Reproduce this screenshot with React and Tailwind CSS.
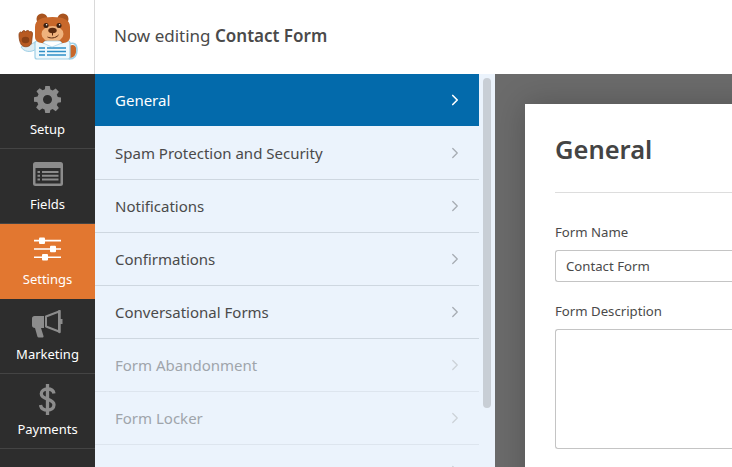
import React from 'react';
import { ChevronRight } from 'lucide-react';

const font = "font-['Noto_Sans','Open_Sans',sans-serif]";

const Logo = () => (
  <svg width="66" height="54" viewBox="0 0 66 54">
    {/* tail */}
    <path d="M54 36c7-3 8 2 7 7-1 4-4 5-7 5z" fill="#c8682b" />
    {/* right sleeve */}
    <path d="M54 34c5-2 8 0 8 6s-3 9-8 9" fill="none" stroke="#9fd0e6" strokeWidth="1.600" />
    {/* left sleeve */}
    <path d="M6 37c3 5 10 6 15 2l-1-7c-3 2-6 3-8 1z" fill="#dcecf4" stroke="#9fd0e6" strokeWidth="1" />
    {/* shirt */}
    <rect x="20" y="31" width="35" height="18" rx="2" fill="#eef8fc" stroke="#9fd0e6" strokeWidth="1.200" />
    <path d="M24 38h27M24 41.500h27M24 45h27" stroke="#2f8fc6" strokeWidth="1.500" />
    <rect x="30" y="36.500" width="2" height="10" fill="#eef8fc" />
    {/* ears */}
    <circle cx="27" cy="9" r="5.500" fill="#a8541f" />
    <circle cx="48" cy="9" r="5.500" fill="#a8541f" />
    {/* head */}
    <path d="M20 17c0-7 6-10 17.500-10S55 10 55 17v10c0 5-5 7-17.500 7S20 32 20 27z" fill="#c8682b" />
    <ellipse cx="37.500" cy="24" rx="11" ry="8" fill="#efb27d" />
    <path d="M28 33l9 4 10-4-2-2H30z" fill="#ffffff" stroke="#9fd0e6" strokeWidth="0.700" />
    <circle cx="31" cy="15.500" r="2.500" fill="#3a2012" />
    <circle cx="44" cy="15.500" r="2.500" fill="#3a2012" />
    <circle cx="31.600" cy="14.800" r="0.800" fill="#ffffff" />
    <circle cx="44.600" cy="14.800" r="0.800" fill="#ffffff" />
    <ellipse cx="37.500" cy="20.500" rx="4.200" ry="2.800" fill="#5a2a10" />
    <path d="M37.500 23v2.500M32.500 27c3 1.500 8 1.500 11-2" stroke="#5a2a10" strokeWidth="1" fill="none" />
    {/* paw */}
    <path d="M4 25c0-3 2-4 3-2 0-3 3-3 3.500-1 1-2 3.500-2 4 0 1.500-1 3-.5 3 2l-1 9c-1 4-7 5-10 2-2-3-2.500-7-2.500-10z" fill="#b85a22" stroke="#8a4116" strokeWidth="0.800" />
    <ellipse cx="10.500" cy="30" rx="3.800" ry="3.200" fill="#8a4116" />
  </svg>
);

const IconGear = () => (
  <svg width="27" height="27" viewBox="0 0 24 24" fill="#8c8c8c">
    <path fillRule="evenodd" d="M10 0h4l.6 3.200c.7.200 1.400.500 2 .9l2.700-1.900 2.800 2.800-1.900 2.700c.4.600.7 1.300.9 2l3.200.6v4l-3.200.6c-.2.700-.5 1.400-.9 2l1.900 2.700-2.800 2.800-2.700-1.900c-.6.400-1.300.7-2 .9L14 24h-4l-.6-3.200c-.7-.2-1.400-.5-2-.9l-2.700 1.900-2.800-2.800 1.900-2.700c-.4-.6-.7-1.300-.9-2L0 14v-4l3.200-.6c.2-.7.5-1.400.9-2L2.200 4.700 5 1.900l2.700 1.900c.6-.4 1.300-.7 2-.9zM12 8a4 4 0 1 0 0 8 4 4 0 0 0 0-8z" />
  </svg>
);

const IconFields = () => (
  <svg width="30" height="24" viewBox="0 0 30 24">
    <rect width="30" height="24" rx="2.500" fill="#8c8c8c" />
    <rect x="2.500" y="6" width="25" height="15.500" fill="#2d2d2d" />
    <path d="M4.500 9h2.500v2H4.500zM4.500 12.800h2.500v2H4.500zM4.500 16.500h2.500v2H4.500zM9 9h16.500v2H9zM9 12.800h16.500v2H9zM9 16.500h16.500v2H9z" fill="#8c8c8c" />
  </svg>
);

const IconSliders = () => (
  <svg width="27" height="24" viewBox="0 0 27 24" fill="#ffffff">
    <path d="M0 2.800h27v1.600H0zM0 11.200h27v1.600H0zM0 19.400h27v1.600H0z" />
    <rect x="5" y="0.500" width="6" height="6.500" rx="1" />
    <rect x="16" y="8.700" width="6" height="6.500" rx="1" />
    <rect x="8" y="17" width="6" height="6.500" rx="1" />
  </svg>
);

const IconMegaphone = () => (
  <svg width="31" height="28" viewBox="0 0 31 28">
    <path d="M0 8.500c0-1.500 1-2.500 2.500-2.500H12v12H9l2.500 8c.2.900-.4 1.600-1.200 1.600H6.800c-.7 0-1.200-.4-1.400-1L3 18c-1.800 0-3-1-3-2.500z" fill="#8c8c8c" />
    <path d="M14 6.500 27 1.500v20L14 16.500z" fill="none" stroke="#8c8c8c" strokeWidth="2" strokeLinejoin="round" />
    <path d="M27.500 1v21" stroke="#8c8c8c" strokeWidth="2.500" strokeLinecap="round" />
    <rect x="28" y="9" width="2.500" height="5" fill="#8c8c8c" />
  </svg>
);

const IconDollar = () => (
  <svg width="17" height="31" viewBox="0 0 17 31" fill="none">
    <path d="M15 9.500c-.5-2.800-3-4.500-6.500-4.500C5 5 2.300 6.800 2.300 9.800c0 6.400 12.700 4.200 12.700 11 0 3.200-2.800 5.200-6.500 5.200-3.800 0-6.500-2-7-5" stroke="#8c8c8c" strokeWidth="3.300" />
    <path d="M8.500 0v31" stroke="#8c8c8c" strokeWidth="3.300" />
  </svg>
);

const tabs = [
  { name: 'Setup', icon: <IconGear /> },
  { name: 'Fields', icon: <IconFields /> },
  { name: 'Settings', icon: <IconSliders />, active: true },
  { name: 'Marketing', icon: <IconMegaphone /> },
  { name: 'Payments', icon: <IconDollar /> },
];

const sections = [
  { name: 'General', active: true },
  { name: 'Spam Protection and Security' },
  { name: 'Notifications' },
  { name: 'Confirmations' },
  { name: 'Conversational Forms' },
  { name: 'Form Abandonment', muted: true },
  { name: 'Form Locker', muted: true },
  { name: 'Form Pages', muted: true },
];

const SidebarTab = ({ tab }) => (
  <div
    className={`h-[75px] shrink-0 flex flex-col items-center border-b border-[#444444] ${
      tab.active ? 'bg-[#e27730] border-[#e27730]' : ''
    }`}
  >
    <div className="h-[46px] w-full flex items-center justify-center pt-1">{tab.icon}</div>
    <span className="text-[13px] leading-[18px] text-white">{tab.name}</span>
  </div>
);

const SectionRow = ({ section }) => {
  if (section.active) {
    return (
      <div className="h-[52px] mb-px shrink-0 flex items-center justify-between pl-5 pr-[15px] bg-[#036aab] text-white">
        <span className="text-[15px]">{section.name}</span>
        <ChevronRight size={18} strokeWidth={2.2} />
      </div>
    );
  }
  return (
    <div
      className={`h-[53px] shrink-0 flex items-center justify-between pl-5 pr-[15px] border-b border-[#ced7e0] ${
        section.muted ? 'text-[#9fa5ab] border-[#dde5ee]' : 'text-[#4a4a4a]'
      }`}
    >
      <span className="text-[15px]">{section.name}</span>
      <ChevronRight size={18} strokeWidth={1.7} className={section.muted ? 'text-[#ccd2d8]' : 'text-[#a6acb3]'} />
    </div>
  );
};

export default function App() {
  return (
    <div className={`${font} w-[732px] h-[467px] overflow-hidden flex flex-col bg-white`}>
      <header className="h-[74px] shrink-0 flex items-center">
        <div className="w-[95px] h-full flex items-end justify-start pl-[15px] pb-[10px] border-r border-[#d9d9d9]">
          <Logo />
        </div>
        <h1 className="pl-[19px] pb-0.5 text-[17px] text-[#4a4a4a]">
          Now editing <span className="font-semibold">Contact Form</span>
        </h1>
      </header>

      <div className="flex-1 flex min-h-0">
        <nav className="w-[95px] shrink-0 bg-[#2d2d2d] flex flex-col overflow-hidden">
          {tabs.map((tab) => (
            <SidebarTab key={tab.name} tab={tab} />
          ))}
        </nav>

        <aside className="w-[400px] shrink-0 bg-[#ebf3fc] flex overflow-hidden">
          <div className="w-[384px] shrink-0 flex flex-col">
            {sections.map((section) => (
              <SectionRow key={section.name} section={section} />
            ))}
          </div>
          <div className="ml-1 mt-1 w-2 h-[330px] rounded-full bg-[#c8ced5]" />
        </aside>

        <main className="flex-1 min-w-0 bg-[#6b6b6b] pl-[30px] pt-[30px] overflow-hidden">
          <div className="w-[260px] h-[400px] bg-white pl-[30px] pt-[26px] shadow-[0_0_30px_rgba(0,0,0,0.22)]">
            <h2 className="text-[25.500px] leading-[38px] font-semibold text-[#444444]">General</h2>
            <div className="mt-[24px] h-px bg-[#dddddd]" />
            <label className="block mt-[29px] text-[13.200px] leading-[20px] text-[#4a4a4a]">Form Name</label>
            <div className="mt-[8px] h-[32px] pt-[2px] rounded-[3px] rounded-r-none border border-r-0 border-[#c4c4c4] flex items-center pl-[10px] text-[13.200px] text-[#4a4a4a]">
              Contact Form
            </div>
            <label className="block mt-[19px] text-[13.200px] leading-[20px] text-[#4a4a4a]">Form Description</label>
            <div className="mt-[8px] h-[120px] rounded-[3px] rounded-r-none border border-r-0 border-[#c4c4c4]" />
          </div>
        </main>
      </div>
    </div>
  );
}
